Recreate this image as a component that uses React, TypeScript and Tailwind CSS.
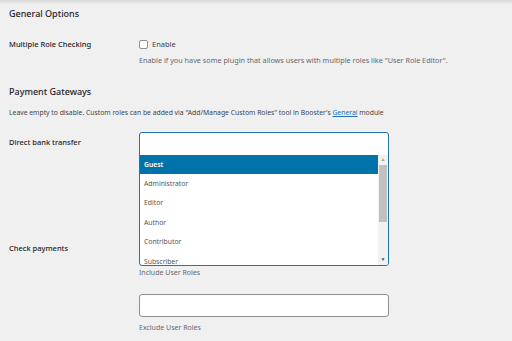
import React from 'react'

const roles = ['Guest', 'Administrator', 'Editor', 'Author', 'Contributor', 'Subscriber']

export default function App() {
  return (
    <div
      className="relative w-[512px] h-[341px] overflow-hidden bg-[#f0f0f1] text-[#1d2327]"
      style={{ fontFamily: '"Noto Sans", "Open Sans", sans-serif' }}
    >
      {/* top shadow */}
      <div className="absolute top-0 left-0 right-0 h-[5px] bg-gradient-to-b from-black/10 to-transparent" />

      <div className="pl-[9px]">
        <h2 className="pt-[7px] text-[9px] leading-[14px] font-medium">General Options</h2>

        {/* Multiple role checking */}
        <div className="flex mt-[17px]">
          <div className="w-[130px] text-[7.5px] leading-[12px] font-medium">Multiple Role Checking</div>
          <div>
            <label className="flex items-center gap-[4px] text-[7.5px] leading-[12px] text-[#3c434a]">
              <span className="w-[9px] h-[9px] rounded-[2px] border border-[#8c8f94] bg-white" />
              Enable
            </label>
            <p className="mt-[5px] text-[7.25px] leading-[11px] text-[#646970] whitespace-nowrap">
              Enable if you have some plugin that allows users with multiple roles like "User Role Editor".
            </p>
          </div>
        </div>

        <h2 className="mt-[19px] text-[9px] leading-[14px] font-medium">Payment Gateways</h2>
        <p className="mt-[8px] text-[6.8px] leading-[11px] text-[#3c434a] whitespace-nowrap">
          Leave empty to disable. Custom roles can be added via "Add/Manage Custom Roles" tool in Booster's{' '}
          <span className="text-[#2271b1] underline">General</span> module
        </p>

        {/* Direct bank transfer + Check payments */}
        <div className="flex mt-[14px]">
          <div className="w-[130px] flex flex-col">
            <div className="pt-[4px] text-[7.5px] leading-[12px] font-medium">Direct bank transfer</div>
            <div className="mt-[94px] text-[7.5px] leading-[12px] font-medium">Check payments</div>
          </div>
          <div className="w-[250px]">
            <div className="h-[134px] border border-[#2271b1] rounded-[3px] bg-white overflow-hidden flex flex-col">
              <div className="h-[22px] shrink-0" />
              <div className="flex flex-1 min-h-0">
                <ul className="flex-1 overflow-hidden">
                  {roles.map((r, i) => (
                    <li
                      key={r}
                      className={
                        i === 0
                          ? 'h-[19.4px] pl-[4px] flex items-center text-[6.8px] font-semibold text-white bg-[#0073aa]'
                          : 'h-[19.4px] pl-[4px] flex items-center text-[6.8px] text-[#50575e]'
                      }
                    >
                      {r}
                    </li>
                  ))}
                </ul>
                <div className="w-[10px] bg-[#f1f1f1] flex flex-col items-center">
                  <div className="h-[10px] flex items-center justify-center text-[5px] text-[#a3a3a3]">▲</div>
                  <div className="w-[8px] h-[57px] bg-[#c1c1c1]" />
                  <div className="flex-1" />
                  <div className="h-[10px] flex items-center justify-center text-[5px] text-[#505050]">▼</div>
                </div>
              </div>
            </div>
            <p className="mt-[1px] text-[7px] leading-[11px] text-[#646970]">Include User Roles</p>

            <div className="mt-[16px] h-[23px] border border-[#8c8f94] rounded-[3px] bg-white" />
            <p className="mt-[5px] text-[7px] leading-[11px] text-[#646970]">Exclude User Roles</p>
          </div>
        </div>
      </div>
    </div>
  )
}
